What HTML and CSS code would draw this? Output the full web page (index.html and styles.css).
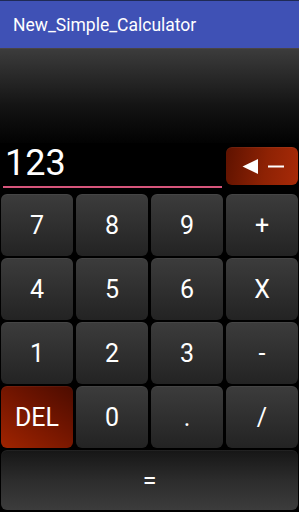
FILE: index.html
```html
<!DOCTYPE html>
<html>
<head>
<meta charset="utf-8">
<link rel="stylesheet" href="styles.css">
</head>
<body>
<div class="app">
  <header class="appbar"><span class="title">New_Simple_Calculator</span></header>
  <main class="screen">
    <div class="spacer"></div>
    <div class="display-row">
      <div class="field"><span class="value">123</span></div>
      <button class="key back" aria-label="backspace">
        <svg width="72" height="38" viewBox="0 0 72 38">
          <polygon points="16.5,19.5 32,12 32,27" fill="#fff"/>
          <rect x="42" y="18.5" width="16" height="2" fill="#fff"/>
        </svg>
      </button>
    </div>
    <div class="keypad">
      <button class="key">7</button>
      <button class="key">8</button>
      <button class="key">9</button>
      <button class="key">+</button>
      <button class="key">4</button>
      <button class="key">5</button>
      <button class="key">6</button>
      <button class="key">X</button>
      <button class="key">1</button>
      <button class="key">2</button>
      <button class="key">3</button>
      <button class="key">-</button>
      <button class="key del">DEL</button>
      <button class="key">0</button>
      <button class="key">.</button>
      <button class="key">/</button>
      <button class="key equals">=</button>
    </div>
  </main>
</div>
</body>
</html>
```
FILE: styles.css
```css
html, body {
  margin: 0;
  padding: 0;
  background: #000;
}
.app {
  width: 299px;
  height: 512px;
  display: flex;
  flex-direction: column;
  font-family: Roboto, "Liberation Sans", sans-serif;
  overflow: hidden;
}
.appbar {
  height: 47px;
  border-top: 1px solid #1f2a55;
  background: #3f51b5;
  display: flex;
  align-items: center;
  padding-left: 13px;
  flex: none;
}
.title {
  color: #fff;
  font-size: 17.5px;
  margin-top: 1px;
}
.screen {
  flex: 1;
  display: flex;
  flex-direction: column;
  background: #000;
}
.spacer {
  height: 94px;
  border-top: 1px solid #4a4444;
  background: linear-gradient(#3c3c3c, #141414 60%, #020202);
  flex: none;
}
.display-row {
  height: 51px;
  display: flex;
  align-items: flex-start;
  flex: none;
}
.field {
  width: 219px;
  margin-left: 3px;
  height: 43px;
  border-bottom: 2px solid #d6557b;
  display: flex;
  align-items: flex-end;
}
.value {
  color: #fff;
  font-size: 36px;
  line-height: 36px;
  padding-left: 2px;
  margin-bottom: 5px;
}
.key {
  border: none;
  border-radius: 6px;
  background: linear-gradient(#3c3c3c, #232323);
  box-shadow: inset 0 1px 0 rgba(255,255,255,0.05);
  color: #fff;
  font-family: Roboto, "Liberation Sans", sans-serif;
  font-size: 25px;
  padding: 0;
  margin: 0;
  display: flex;
  align-items: center;
  justify-content: center;
}
.back {
  width: 72px;
  height: 38px;
  margin-left: 4px;
  margin-top: 4px;
  background: linear-gradient(100deg, #5e1200, #8e2204 55%, #a82a08);
}
.back svg {
  display: block;
}
.keypad {
  display: grid;
  grid-template-columns: repeat(4, 1fr);
  grid-auto-rows: 62px;
  gap: 2px 3px;
  padding: 0 1px 0 1px;
  flex: none;
}
.del {
  background: linear-gradient(35deg, #a02400, #6e1400 60%, #4c0c00);
}
.equals {
  grid-column: 1 / -1;
  height: 60px;
  background: linear-gradient(#161616, #2c2c2c 50%, #3c3c3c);
}
```
